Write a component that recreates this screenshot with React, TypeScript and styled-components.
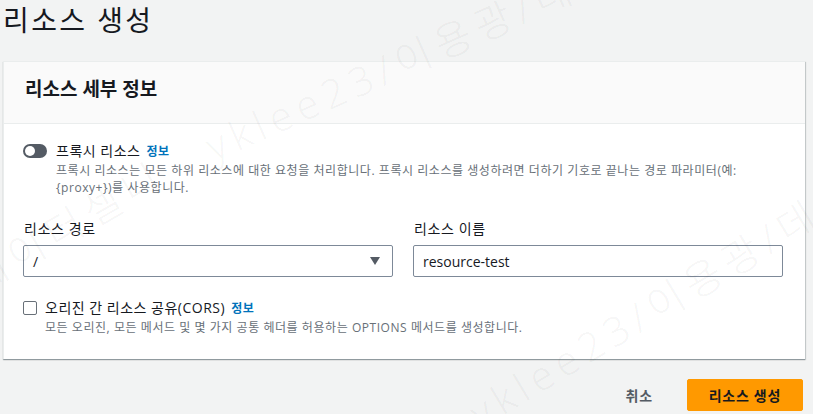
import styled, { createGlobalStyle } from 'styled-components';

const GlobalStyle = createGlobalStyle`
	html, body {
		margin: 0;
		padding: 0;
		background-color: #f2f3f3;
	}
	body {
		font-family: 'Open Sans', 'Noto Sans CJK KR', sans-serif;
		color: #16191f;
	}
	* {
		box-sizing: border-box;
	}
`;

const Page = styled.div`
	position: relative;
	height: 414px;
	overflow: hidden;
	padding: 0 8px 0 3px;
`;
const PageTitle = styled.h1`
	margin: 0 0 21px;
	font-size: 28px;
	line-height: 40px;
	font-weight: 400;
	letter-spacing: 2.4px;
`;
const Container = styled.section`
	background-color: #fff;
	border-top: 1px solid #eaeded;
	border-left: 1px solid #eaeded;
	box-shadow: 0 1px 1px 0 rgba(0, 28, 36, 0.3), 1px 1px 1px 0 rgba(0, 28, 36, 0.15);
`;
const ContainerHeader = styled.header`
	background-color: #fafafa;
	border-bottom: 1px solid #eaeded;
	padding: 15px 21px 22px;
	> h2 {
		margin: 0;
		font-size: 19px;
		line-height: 24px;
		font-weight: 700;
	}
`;
const ContainerBody = styled.div`
	padding: 17px 22px 23px 19px;
`;
const OptionRow = styled.div<{ $gap: number }>`
	display: flex;
	align-items: flex-start;
	gap: ${(p) => p.$gap}px;
`;
const Toggle = styled.span`
	flex: none;
	width: 24px;
	height: 14px;
	margin-top: 3px;
	border-radius: 7px;
	background-color: #545b64;
	position: relative;
	&::after {
		content: '';
		position: absolute;
		top: 2px;
		left: 2px;
		width: 10px;
		height: 10px;
		border-radius: 50%;
		background-color: #fff;
	}
`;
const CheckBox = styled.span`
	flex: none;
	width: 14px;
	height: 14px;
	margin-top: 3px;
	border: 1.5px solid #687078;
	border-radius: 2px;
	background-color: #fff;
`;
const OptionText = styled.div`
	flex: 1;
	min-width: 0;
`;
const OptionLabel = styled.div`
	font-size: 14px;
	line-height: 20px;
	letter-spacing: 0.5px;
`;
const InfoLink = styled.a`
	font-size: 12px;
	font-weight: 700;
	letter-spacing: 0.5px;
	color: #0073bb;
	margin-left: 6px;
	text-decoration: none;
`;
const OptionDesc = styled.p`
	margin: 0;
	font-size: 12px;
	line-height: 17px;
	letter-spacing: 0.55px;
	word-break: keep-all;
	color: #687078;
`;
const FieldGrid = styled.div`
	display: grid;
	grid-template-columns: 1fr 1fr;
	gap: 20px;
	margin: 23px 0 21px;
`;
const Field = styled.div`
	display: flex;
	flex-direction: column;
	gap: 6px;
	> label {
		font-size: 14px;
		line-height: 20px;
		letter-spacing: 0.6px;
		padding-left: 1px;
	}
`;
const InputBox = styled.div`
	height: 32px;
	border: 1px solid #7d8998;
	border-radius: 2px;
	background-color: #fff;
	display: flex;
	align-items: center;
	justify-content: space-between;
	padding: 0 12px 0 9px;
	font-size: 14px;
`;
const Caret = styled.span`
	width: 0;
	height: 0;
	border-left: 5px solid transparent;
	border-right: 5px solid transparent;
	border-top: 8px solid #545b64;
`;
const Actions = styled.div`
	display: flex;
	justify-content: flex-end;
	align-items: center;
	gap: 12px;
	margin-top: 20px;
	padding-right: 2px;
`;
const Button = styled.button<{ $primary?: boolean }>`
	height: 32px;
	padding: 0 21px;
	font-family: inherit;
	font-size: 14px;
	font-weight: 700;
	letter-spacing: 0.7px;
	border-radius: 2px;
	border: 1px solid ${(p) => (p.$primary ? '#ff9900' : 'transparent')};
	background-color: ${(p) => (p.$primary ? '#ff9900' : 'transparent')};
	color: ${(p) => (p.$primary ? '#16191f' : '#545b64')};
`;
const Watermark = styled.span<{ $origin: 'left' | 'right'; $angle: number }>`
	position: absolute;
	pointer-events: none;
	white-space: pre;
	font-size: 40px;
	line-height: 50px;
	font-weight: 300;
	letter-spacing: 7px;
	color: rgba(0, 0, 0, 0.055);
	transform-origin: ${(p) => p.$origin} center;
	transform: rotate(${(p) => p.$angle}deg);
`;

export default function App() {
	return (
		<>
			<GlobalStyle />
			<Page>
				<PageTitle>리소스 생성</PageTitle>
				<Container>
					<ContainerHeader>
						<h2>리소스 세부 정보</h2>
					</ContainerHeader>
					<ContainerBody>
						<OptionRow $gap={9}>
							<Toggle role={'switch'} aria-checked={false} />
							<OptionText>
								<OptionLabel>
									프록시 리소스<InfoLink>정보</InfoLink>
								</OptionLabel>
								<OptionDesc>
									프록시 리소스는 모든 하위 리소스에 대한 요청을 처리합니다. 프록시 리소스를 생성하려면 더하기 기호로 끝나는 경로 파라미터(예: {'{proxy+}'})를 사용합니다.
								</OptionDesc>
							</OptionText>
						</OptionRow>
						<FieldGrid>
							<Field>
								<label>리소스 경로</label>
								<InputBox>
									<span>/</span>
									<Caret />
								</InputBox>
							</Field>
							<Field>
								<label>리소스 이름</label>
								<InputBox>
									<span>resource-test</span>
								</InputBox>
							</Field>
						</FieldGrid>
						<OptionRow $gap={8}>
							<CheckBox role={'checkbox'} aria-checked={false} />
							<OptionText>
								<OptionLabel>
									오리진 간 리소스 공유(CORS)<InfoLink>정보</InfoLink>
								</OptionLabel>
								<OptionDesc>모든 오리진, 모든 메서드 및 몇 가지 공통 헤더를 허용하는 OPTIONS 메서드를 생성합니다.</OptionDesc>
							</OptionText>
						</OptionRow>
					</ContainerBody>
				</Container>
				<Actions>
					<Button type={'button'}>취소</Button>
					<Button type={'button'} $primary>
						리소스 생성
					</Button>
				</Actions>
				<Watermark $origin={'right'} $angle={-30} style={{ right: 651, top: 146 }}>
					데이터셀니
				</Watermark>
				<Watermark $origin={'left'} $angle={-24} style={{ left: 208, top: 123 }}>
					yklee23/이용광/데이터셀
				</Watermark>
				<Watermark $origin={'left'} $angle={-31} style={{ left: 473, top: 391 }}>
					yklee23/이용광/데이터셀
				</Watermark>
			</Page>
		</>
	);
}
